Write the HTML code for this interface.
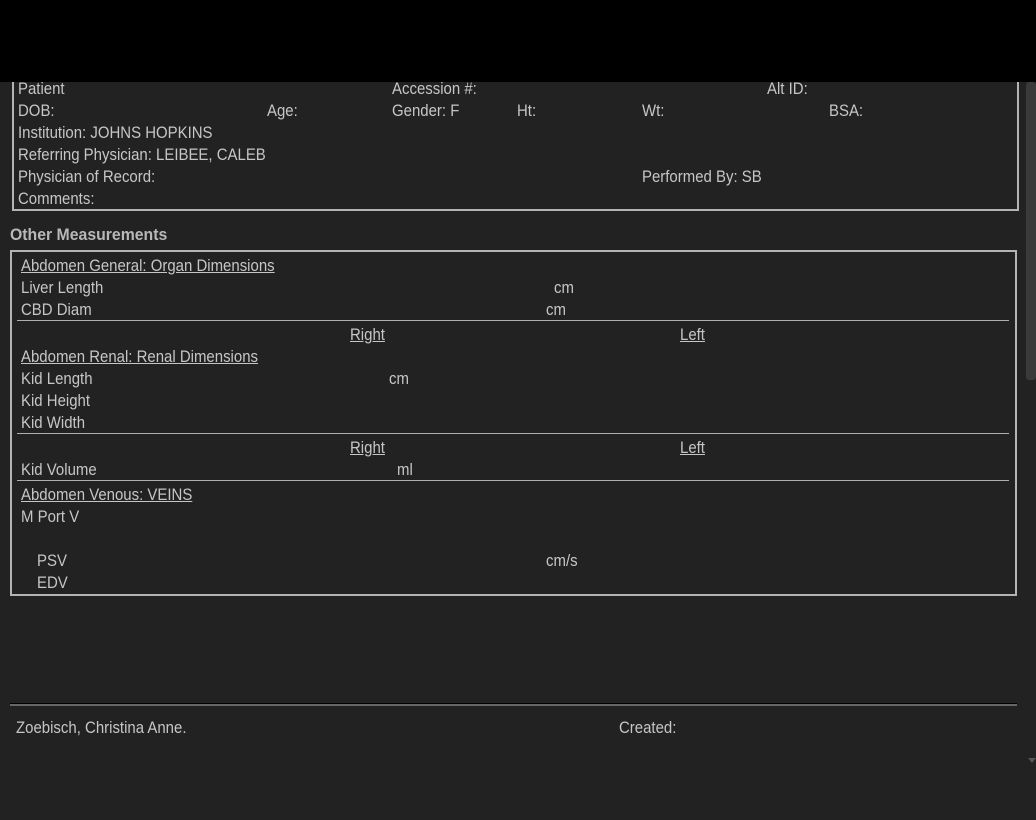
<!DOCTYPE html>
<html><head><style>
html,body{margin:0;padding:0;width:1036px;height:820px;overflow:hidden;background:#222;}
body{position:relative;font-family:"Liberation Sans",sans-serif;font-size:17px;color:#c6c6c6;}
.t{position:absolute;line-height:22px;white-space:nowrap;transform:scaleX(0.88);transform-origin:0 0;}
.u{text-decoration:underline;}
.b{font-weight:bold;color:#b8b8b8;}
.box{position:absolute;border:2px solid #b4b4b4;box-sizing:border-box;}
.hr{position:absolute;height:1px;background:#b0b0b0;left:17px;width:992px;}
</style></head><body>
<div style="position:absolute;left:0;top:0;width:1036px;height:82px;background:#000"></div>
<div class="box" style="left:12px;top:60px;width:1007px;height:151px;"></div>
<div style="position:absolute;left:0;top:0;width:1026px;height:82px;background:#000"></div>
<div style="position:absolute;left:1026px;top:82px;width:10px;height:298px;background:#3a3a3a;border-radius:3px"></div>
<div class="t" style="left:18px;top:78px">Patient</div>
<div class="t" style="left:392px;top:78px">Accession #:</div>
<div class="t" style="left:767px;top:78px">Alt ID:</div>
<div class="t" style="left:18px;top:100px">DOB:</div>
<div class="t" style="left:267px;top:100px">Age:</div>
<div class="t" style="left:392px;top:100px">Gender: F</div>
<div class="t" style="left:517px;top:100px">Ht:</div>
<div class="t" style="left:642px;top:100px">Wt:</div>
<div class="t" style="left:829px;top:100px">BSA:</div>
<div class="t" style="left:18px;top:122px">Institution: JOHNS HOPKINS</div>
<div class="t" style="left:18px;top:144px">Referring Physician: LEIBEE, CALEB</div>
<div class="t" style="left:18px;top:166px">Physician of Record:</div>
<div class="t" style="left:642px;top:166px">Performed By: SB</div>
<div class="t" style="left:18px;top:188px">Comments:</div>
<div class="t b" style="left:10px;top:224px;transform:scaleX(0.93)">Other Measurements</div>
<div class="box" style="left:10px;top:250px;width:1007px;height:346px;"></div>
<div class="t u" style="left:21px;top:255px">Abdomen General: Organ Dimensions</div>
<div class="t" style="left:21px;top:277px">Liver Length</div>
<div class="t" style="left:554px;top:277px">cm</div>
<div class="t" style="left:21px;top:299px">CBD Diam</div>
<div class="t" style="left:546px;top:299px">cm</div>
<div class="hr" style="top:320px"></div>
<div class="t u" style="left:350px;top:324px">Right</div>
<div class="t u" style="left:680px;top:324px">Left</div>
<div class="t u" style="left:21px;top:346px">Abdomen Renal: Renal Dimensions</div>
<div class="t" style="left:21px;top:368px">Kid Length</div>
<div class="t" style="left:389px;top:368px">cm</div>
<div class="t" style="left:21px;top:390px">Kid Height</div>
<div class="t" style="left:21px;top:412px">Kid Width</div>
<div class="hr" style="top:433px"></div>
<div class="t u" style="left:350px;top:437px">Right</div>
<div class="t u" style="left:680px;top:437px">Left</div>
<div class="t" style="left:21px;top:459px">Kid Volume</div>
<div class="t" style="left:397px;top:459px">ml</div>
<div class="hr" style="top:480px"></div>
<div class="t u" style="left:21px;top:484px">Abdomen Venous: VEINS</div>
<div class="t" style="left:21px;top:506px">M Port V</div>
<div class="t" style="left:37px;top:550px">PSV</div>
<div class="t" style="left:546px;top:550px">cm/s</div>
<div class="t" style="left:37px;top:572px">EDV</div>
<div style="position:absolute;left:10px;top:703px;width:1007px;height:1px;background:#000"></div>
<div style="position:absolute;left:10px;top:704px;width:1007px;height:2px;background:#666"></div>
<div class="t" style="left:16px;top:717px">Zoebisch, Christina Anne.</div>
<div class="t" style="left:619px;top:717px">Created:</div>
<div style="position:absolute;left:1028px;top:758px;width:0;height:0;border-left:4px solid transparent;border-right:4px solid transparent;border-top:5px solid #555"></div>
</body></html>
